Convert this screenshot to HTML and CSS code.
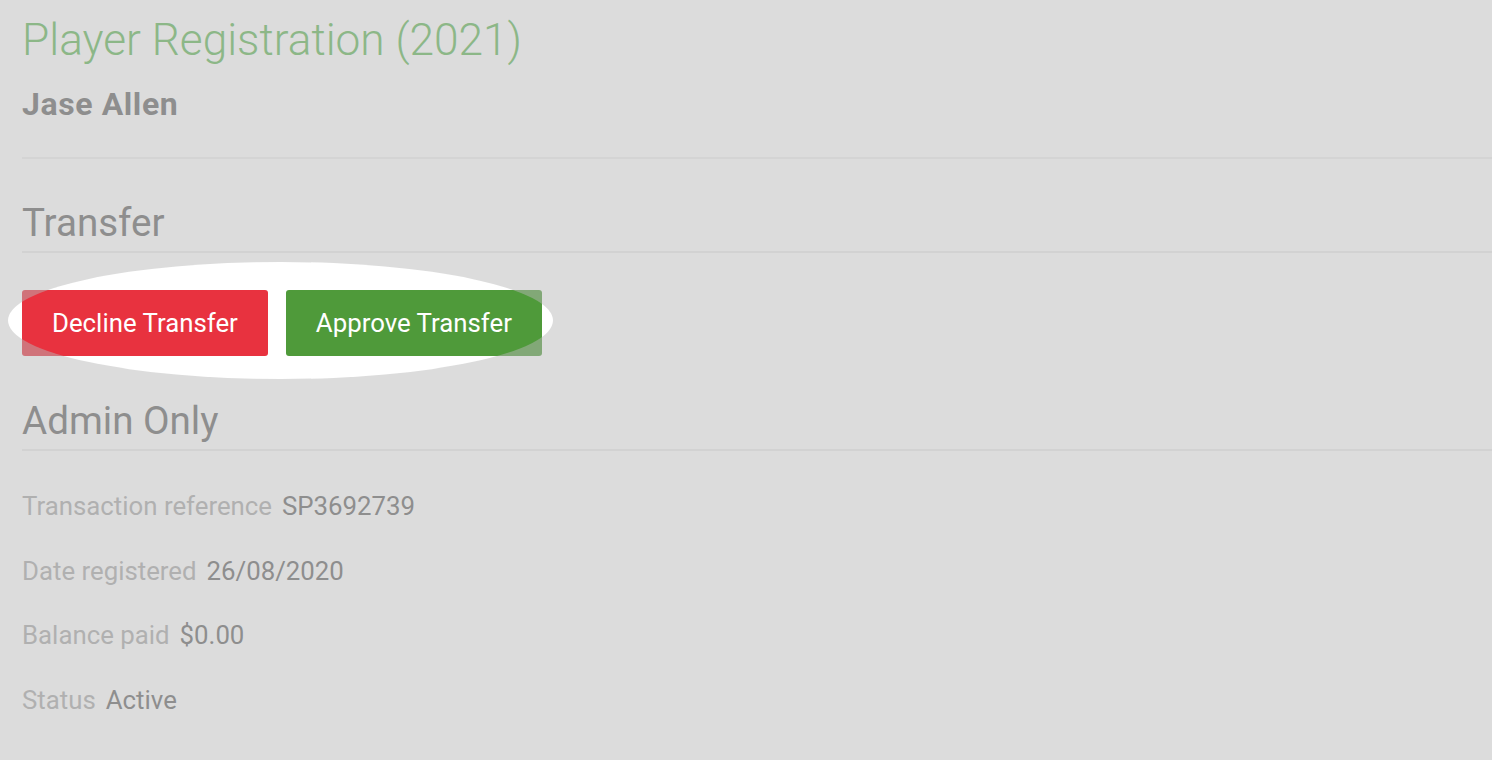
FILE: index.html
```html
<!DOCTYPE html>
<html lang="en">
  <head>
    <meta charset="UTF-8" />
    <meta name="viewport" content="width=device-width, initial-scale=1.0" />
    <title>Player Registration</title>

    <link rel="stylesheet" href="styles.css">
  </head>
  <body>
    <div class="page">
      <!-- Registration header -->
      <h1 class="title">Player Registration (2021)</h1>
      <div class="player">Jase Allen</div>
      <div class="divider"></div>

      <!-- Transfer actions -->
      <h2 class="section-title">Transfer</h2>
      <div class="actions">
        <button class="btn btn-decline">Decline Transfer</button>
        <button class="btn btn-approve">Approve Transfer</button>
      </div>

      <!-- Admin details -->
      <h2 class="section-title">Admin Only</h2>
      <div class="details">
        <div class="detail-row">
          <span class="detail-label">Transaction reference</span>
          <span class="detail-value">SP3692739</span>
        </div>
        <div class="detail-row">
          <span class="detail-label">Date registered</span>
          <span class="detail-value">26/08/2020</span>
        </div>
        <div class="detail-row">
          <span class="detail-label">Balance paid</span>
          <span class="detail-value">$0.00</span>
        </div>
        <div class="detail-row">
          <span class="detail-label">Status</span>
          <span class="detail-value">Active</span>
        </div>
      </div>
    </div>

    <!-- Spotlight over the transfer buttons -->
    <div class="spotlight"></div>
  </body>
</html>
```

FILE: styles.css
```css
/* Base page */
body {
  margin: 0;
  background: #fff;
  font-family: Roboto, "Liberation Sans", Arial, sans-serif;
  color: #666;
}

.page {
  padding: 14px 0 0 22px;
}

/* Header */
.title {
  margin: 0;
  font-size: 44.2px;
  line-height: 52px;
  font-weight: 300;
  color: #63b759;
}

.player {
  margin-top: 19px;
  font-size: 32px;
  line-height: 38px;
  font-weight: 700;
  letter-spacing: 0.6px;
  color: #666;
}

.divider {
  margin-top: 34px;
  border-top: 2px solid #f0f0f0;
}

/* Section headings with underline */
.section-title {
  margin: 0;
  padding-bottom: 5px;
  font-size: 38.6px;
  line-height: 46px;
  font-weight: 400;
  color: #666;
  border-bottom: 2px solid #ebebeb;
}

.divider + .section-title {
  margin-top: 41px;
}

/* Transfer buttons */
.actions {
  display: flex;
  gap: 18px;
  margin: 37px 0 42px;
}

.btn {
  padding: 18px 30px;
  border: 0;
  border-radius: 3px;
  font-family: inherit;
  font-size: 25.8px;
  line-height: 30px;
  color: #fff;
  cursor: pointer;
}

.btn-decline {
  background: #e8323f;
}

.btn-approve {
  background: #4f9a3a;
}

/* Admin details list */
.details {
  display: flex;
  flex-direction: column;
  gap: 34.5px;
  margin-top: 40px;
}

.detail-row {
  display: flex;
  gap: 10px;
  font-size: 25.8px;
  line-height: 30px;
}

.detail-label {
  color: #aaa;
}

.detail-value {
  color: #666;
}

/* Dimmed overlay with an elliptical hole around the buttons */
.spotlight {
  position: fixed;
  left: 8px;
  top: 262px;
  width: 545px;
  height: 117px;
  border-radius: 50%;
  box-shadow: 0 0 0 3000px rgba(183, 183, 183, 0.49);
  pointer-events: none;
}
```
